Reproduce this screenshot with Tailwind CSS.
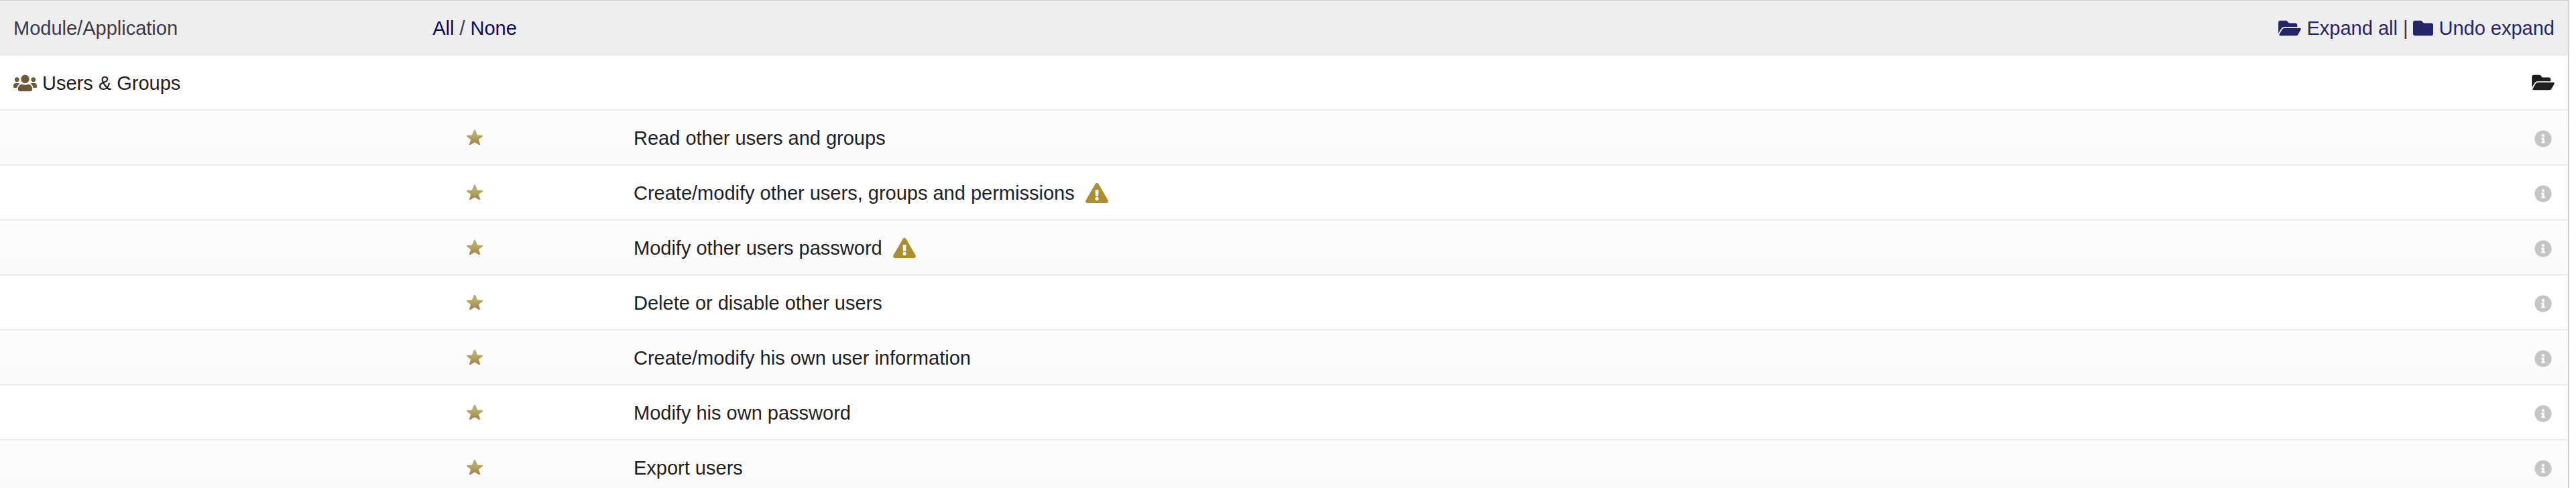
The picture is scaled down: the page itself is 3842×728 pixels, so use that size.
<!DOCTYPE html>
<html lang="en">
<head>
  <meta charset="UTF-8" />
  <meta name="viewport" content="width=device-width, initial-scale=1.0"/>
  <title>Users &amp; Groups - Permissions</title>
  <script src="https://cdn.jsdelivr.net/npm/@tailwindcss/browser@4"></script>
</head>
<body class="h-screen overflow-hidden bg-white pr-[10px] font-['Liberation_Sans',Arial,sans-serif] text-[29px] leading-[36px] text-[#1e1e1e]">

  <!-- Icons -->
  <svg class="hidden">
    <symbol id="folder-open" viewBox="0 0 576 512"><path d="M572.694 292.093L500.27 416.248A63.997 63.997 0 0 1 444.989 448H45.025c-18.523 0-30.064-20.093-20.731-36.093l72.424-124.155A64 64 0 0 1 152 256h399.964c18.523 0 30.064 20.093 20.73 36.093zM152 224h328v-48c0-26.51-21.49-48-48-48H272l-64-64H48C21.49 64 0 85.49 0 112v278.046l69.077-118.418C86.214 242.25 117.989 224 152 224z"/></symbol>
    <symbol id="folder" viewBox="0 0 512 512"><path d="M464 128H272l-64-64H48C21.49 64 0 85.49 0 112v288c0 26.51 21.49 48 48 48h416c26.51 0 48-21.49 48-48V176c0-26.51-21.49-48-48-48z"/></symbol>
    <symbol id="users" viewBox="0 0 640 512"><path d="M96 224c35.3 0 64-28.7 64-64s-28.7-64-64-64-64 28.7-64 64 28.7 64 64 64zm448 0c35.3 0 64-28.7 64-64s-28.7-64-64-64-64 28.7-64 64 28.7 64 64 64zm32 32h-64c-17.6 0-33.5 7.1-45.1 18.6 40.3 22.1 68.9 62 75.1 109.4h66c17.7 0 32-14.3 32-32v-32c0-35.3-28.7-64-64-64zm-256 0c61.9 0 112-50.1 112-112S381.9 32 320 32 208 82.1 208 144s50.1 112 112 112zm76.8 32h-8.3c-20.8 10-43.9 16-68.5 16s-47.6-6-68.5-16h-8.3C179.6 288 128 339.6 128 403.2V432c0 26.5 21.5 48 48 48h288c26.5 0 48-21.5 48-48v-28.8c0-63.6-51.6-115.2-115.2-115.2zm-223.7-13.4C161.5 263.1 145.6 256 128 256H64c-35.3 0-64 28.7-64 64v32c0 17.7 14.3 32 32 32h65.9c6.3-47.4 34.9-87.3 75.2-109.4z"/></symbol>
    <symbol id="info" viewBox="0 0 512 512"><path d="M256 8C119.043 8 8 119.083 8 256c0 136.997 111.043 248 248 248s248-111.003 248-248C504 119.083 392.957 8 256 8zm0 110c23.196 0 42 18.804 42 42s-18.804 42-42 42-42-18.804-42-42 18.804-42 42-42zm56 254c0 6.627-5.373 12-12 12h-88c-6.627 0-12-5.373-12-12v-24c0-6.627 5.373-12 12-12h12v-64h-12c-6.627 0-12-5.373-12-12v-24c0-6.627 5.373-12 12-12h64c6.627 0 12 5.373 12 12v100h12c6.627 0 12 5.373 12 12v24z"/></symbol>
    <symbol id="warning" viewBox="0 0 576 512"><path d="M569.517 440.013C587.975 472.007 564.806 512 527.94 512H48.054c-36.937 0-59.999-40.055-41.577-71.987L246.423 23.985c18.467-32.009 64.72-31.951 83.154 0l239.94 416.028zM288 354c-25.405 0-46 20.595-46 46s20.595 46 46 46 46-20.595 46-46-20.595-46-46-46zm-43.673-165.346l7.418 136c.347 6.364 5.609 11.346 11.982 11.346h48.546c6.373 0 11.635-4.982 11.982-11.346l7.418-136c.375-6.874-5.098-12.654-11.982-12.654h-63.383c-6.884 0-12.356 5.78-11.981 12.654z"/></symbol>
    <symbol id="star" viewBox="0 0 24 22"><path d="M11 0h2l3 7.500 8 .4v1.600l-6 4.600 2.200 7.900h-2L12 18.200 5.800 22h-2L6 14.100 0 9.500V7.900l8-.4z"/></symbol>
  </svg>
  <svg class="absolute size-0" aria-hidden="true">
    <linearGradient id="gold" x1="0" y1="0" x2="0" y2="1">
      <stop offset="0" stop-color="#c0a584"/>
      <stop offset=".4" stop-color="#b3ac62"/>
      <stop offset="1" stop-color="#a87a56"/>
    </linearGradient>
  </svg>

  <table class="w-full table-fixed border-separate border-spacing-0 border-t border-r-2 border-t-[#d0d0d0] border-r-[#d0d0d0]">
    <colgroup>
      <col class="w-[491px]">
      <col class="w-[434px]">
      <col>
      <col class="w-[480px]">
    </colgroup>
    <thead>
      <tr class="h-[82px] bg-[#eee] text-[#3a3a4a]">
        <th class="px-5 text-left font-normal">Module/Application</th>
        <th class="px-5 text-center font-normal"><a href="#" class="text-[#0a0a5a]">All</a> / <a href="#" class="text-[#0a0a5a]">None</a></th>
        <th></th>
        <th class="px-5 font-normal">
          <div class="flex items-center justify-end gap-2 whitespace-nowrap">
            <a href="#" class="flex items-center gap-2 text-[#25256a]"><svg class="h-[30px] w-[34px] fill-current"><use href="#folder-open"/></svg>Expand all</a>
            <span>|</span>
            <a href="#" class="flex items-center gap-2 text-[#25256a]"><svg class="size-[30px] fill-current"><use href="#folder"/></svg>Undo expand</a>
          </div>
        </th>
      </tr>
    </thead>
    <tbody id="rights">
      <tr class="h-[82px]">
        <td colspan="3" class="border-b-2 border-[#ececec] px-5 pt-[2px]">
          <div class="flex items-center gap-2"><svg class="h-[28px] w-[35px] fill-[#6c5a36]"><use href="#users"/></svg>Users &amp; Groups</div>
        </td>
        <td class="border-b-2 border-[#ececec] px-5">
          <button type="button" aria-label="Collapse" class="ml-auto flex w-[34px] justify-center"><svg class="h-[30px] w-[34px] fill-[#1e1e1e]"><use href="#folder-open"/></svg></button>
        </td>
      </tr>
    </tbody>
  </table>

  <template id="row">
    <tr class="h-[82px] odd:bg-white even:bg-linear-to-b even:from-[#fdfdfd] even:to-[#fafafa]">
      <td class="border-b-2 border-[#ececec]"></td>
      <td class="border-b-2 border-[#ececec]"><svg class="mx-auto h-[22px] w-[24px] fill-[url(#gold)]"><use href="#star"/></svg></td>
      <td class="border-b-2 border-[#ececec] px-5 pt-[2px]">
        <div class="flex items-center gap-4"><span class="label"></span><svg class="warn h-[30px] w-[34px] fill-[#ae8d2e]"><use href="#warning"/></svg></div>
      </td>
      <td class="border-b-2 border-[#ececec] px-5">
        <button type="button" aria-label="Info" class="ml-auto flex w-[34px] justify-center pt-1"><svg class="size-[26px] fill-[#c5c5c5]"><use href="#info"/></svg></button>
      </td>
    </tr>
  </template>

  <script>
    const rights = [
      { label: "Read other users and groups" },
      { label: "Create/modify other users, groups and permissions", warn: true },
      { label: "Modify other users password", warn: true },
      { label: "Delete or disable other users" },
      { label: "Create/modify his own user information" },
      { label: "Modify his own password" },
      { label: "Export users" }
    ];
    const template = document.getElementById("row");
    rights.forEach((right) => {
      const row = template.content.cloneNode(true);
      row.querySelector(".label").innerText = right.label;
      if (!right.warn) row.querySelector(".warn").remove();
      document.getElementById("rights").appendChild(row);
    });
  </script>
</body>
</html>
